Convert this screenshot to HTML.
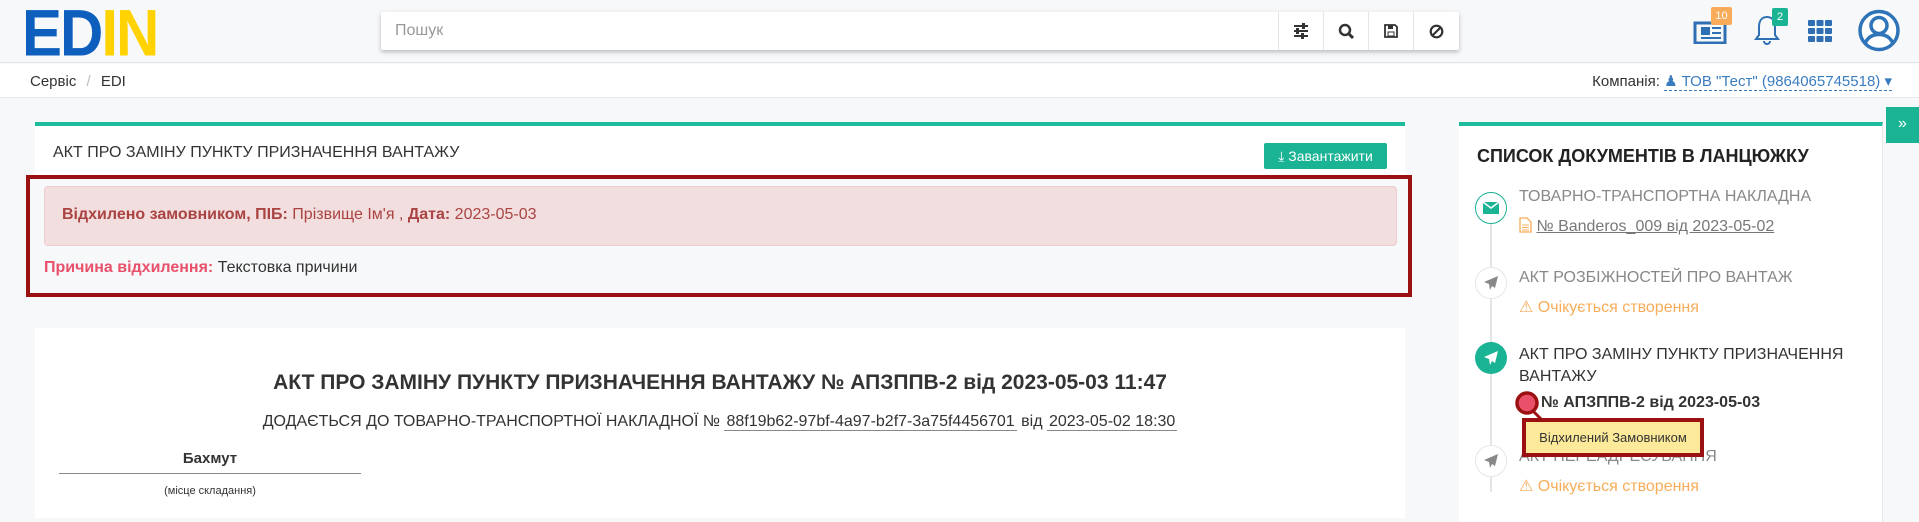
<!DOCTYPE html>
<html><head><meta charset="utf-8"><style>
*{box-sizing:border-box;margin:0;padding:0}
body{width:1919px;height:511px;overflow:hidden;background:#f7f8fa;font-family:"Liberation Sans",sans-serif;color:#333;position:relative}
.a{position:absolute}
.hdr{left:0;top:0;width:1919px;height:63px;background:#f7f8fa;border-bottom:1px solid #e3e5e8}
.bc{left:0;top:64px;width:1919px;height:34px;background:#fff;border-bottom:1px solid #e7e7e7}
.logo{font-weight:bold;font-size:60px;line-height:48px;letter-spacing:-2px;transform:scaleY(1.1);transform-origin:top left}
.search{left:381px;top:12px;width:1078px;height:38px;background:#fff;box-shadow:0 2px 5px rgba(0,0,0,.25);border-radius:2px}
.sb{top:0;height:38px;width:45px;border-left:1px solid #e5e5e5;display:flex;align-items:center;justify-content:center}
.card{background:#fff;border-top:4px solid #1cbc9c}
.tl{left:1490px;top:212px;width:2px;height:280px;background:#e5e5e5}
.circ{width:32px;height:32px;border-radius:50%;display:flex;align-items:center;justify-content:center}
.it{font-size:16px;color:#888}
.warn{font-size:16px;color:#f8ac59}
</style></head><body>
<div class="a hdr"></div>
<div class="a logo" style="left:22px;top:7px"><span style="color:#0d5ebd">ED</span><span style="color:#ffd200">IN</span></div>
<div class="a search">
  <div class="a" style="left:14px;top:10px;font-size:16px;color:#999">Пошук</div>
  <div class="a sb" style="left:897px"><svg width="16" height="16" viewBox="0 0 16 16"><g stroke="#333" stroke-width="2"><line x1="1" y1="3" x2="15" y2="3"/><line x1="1" y1="8" x2="15" y2="8"/><line x1="1" y1="13" x2="15" y2="13"/></g><g fill="#333"><rect x="9" y="0" width="3" height="6"/><rect x="3" y="5" width="3" height="6"/><rect x="8" y="10" width="3" height="6"/></g></svg></div>
  <div class="a sb" style="left:942px"><svg width="16" height="16" viewBox="0 0 16 16"><circle cx="7" cy="7" r="5" fill="none" stroke="#333" stroke-width="2.5"/><line x1="10.5" y1="10.5" x2="15" y2="15" stroke="#333" stroke-width="3"/></svg></div>
  <div class="a sb" style="left:987px"><svg width="14" height="14" viewBox="0 0 14 14"><path d="M1 1h10l2 2v10H1z" fill="none" stroke="#333" stroke-width="1.8"/><rect x="4" y="1" width="5" height="4" fill="#333"/><rect x="4" y="8" width="6" height="4" fill="none" stroke="#333"/></svg></div>
  <div class="a sb" style="left:1032px"><svg width="15" height="15" viewBox="0 0 15 15"><circle cx="7.5" cy="7.5" r="5.8" fill="none" stroke="#333" stroke-width="2.2"/><line x1="3.5" y1="11.5" x2="11.5" y2="3.5" stroke="#333" stroke-width="2.2"/></svg></div>
</div>
<svg class="a" style="left:1693px;top:18px" width="34" height="26" viewBox="0 0 34 26"><rect x="2" y="5" width="30" height="20" fill="none" stroke="#2f6fb3" stroke-width="3"/><rect x="8" y="9" width="9" height="8" fill="#2f6fb3"/><g stroke="#2f6fb3" stroke-width="2"><line x1="19" y1="10" x2="28" y2="10"/><line x1="19" y1="15" x2="28" y2="15"/><line x1="8" y1="20" x2="28" y2="20"/></g></svg>
<div class="a" style="left:1711px;top:7px;width:21px;height:18px;background:#f8ac59;color:#fff;font-size:11px;text-align:center;line-height:18px;border-radius:2px">10</div>
<svg class="a" style="left:1754px;top:14px" width="26" height="32" viewBox="0 0 26 32"><path d="M13 3c-6 0-8 5-8 10v8l-3 4h22l-3-4v-8c0-5-2-10-8-10z" fill="none" stroke="#2f6fb3" stroke-width="2"/><path d="M10 27a3 3 0 0 0 6 0" fill="none" stroke="#2f6fb3" stroke-width="2"/></svg>
<div class="a" style="left:1772px;top:8px;width:16px;height:18px;background:#1ab394;color:#fff;font-size:11px;text-align:center;line-height:18px;border-radius:2px">2</div>
<svg class="a" style="left:1808px;top:20px" width="24" height="22" viewBox="0 0 24 22"><g fill="#2f6fb3"><rect x="0" y="0" width="7" height="6" rx="1"/><rect x="8.5" y="0" width="7" height="6" rx="1"/><rect x="17" y="0" width="7" height="6" rx="1"/><rect x="0" y="8" width="7" height="6" rx="1"/><rect x="8.5" y="8" width="7" height="6" rx="1"/><rect x="17" y="8" width="7" height="6" rx="1"/><rect x="0" y="16" width="7" height="6" rx="1"/><rect x="8.5" y="16" width="7" height="6" rx="1"/><rect x="17" y="16" width="7" height="6" rx="1"/></g></svg>
<svg class="a" style="left:1858px;top:9px" width="42" height="43" viewBox="0 0 42 42"><defs><clipPath id="c"><circle cx="21" cy="21" r="18"/></clipPath></defs><circle cx="21" cy="21" r="19" fill="#fff" stroke="#2f74b8" stroke-width="3.5"/><circle cx="21" cy="16" r="8" fill="none" stroke="#2f74b8" stroke-width="3.5"/><path d="M7 34c3-7 8-9 14-9s11 2 14 9" fill="none" stroke="#2f74b8" stroke-width="3.5" clip-path="url(#c)"/></svg>

<div class="a bc"></div>
<div class="a" style="left:30px;top:73px;font-size:15px;color:#333">Сервіс <span style="color:#bbb;margin:0 6px">/</span> EDI</div>
<div class="a" style="right:27px;top:72px;font-size:15px;color:#333;white-space:nowrap">Компанія: <span style="color:#3a7cc0;border-bottom:1px dashed #3a7cc0">&#9823; ТОВ "Тест" (9864065745518) ▾</span></div>

<div class="a card" style="left:35px;top:122px;width:1370px;height:160px"></div>
<div class="a" style="left:53px;top:144px;font-size:16px;color:#333">АКТ ПРО ЗАМІНУ ПУНКТУ ПРИЗНАЧЕННЯ ВАНТАЖУ</div>
<div class="a" style="left:1264px;top:143px;width:123px;height:26px;background:#1ab394;color:#fff;font-size:14px;line-height:26px;text-align:center;border-radius:2px">&#10515; Завантажити</div>
<div class="a" style="left:26px;top:175px;width:1386px;height:122px;border:4px solid #9b1111;background:#f7f8fa"></div>
<div class="a" style="left:44px;top:186px;width:1353px;height:60px;background:#f2dede;border:1px solid #ebccd1;border-radius:4px;color:#a94442;font-size:16px;padding:19px 17px">
<b>Відхилено замовником, ПІБ:</b> Прізвище Ім'я , <b>Дата:</b> 2023-05-03</div>
<div class="a" style="left:44px;top:259px;font-size:16px"><b style="color:#e9506a">Причина відхилення:</b> Текстовка причини</div>

<div class="a" style="left:35px;top:328px;width:1370px;height:190px;background:#fff"></div>
<div class="a" style="left:35px;top:371px;width:1370px;text-align:center;font-size:21px;font-weight:bold;color:#333">АКТ ПРО ЗАМІНУ ПУНКТУ ПРИЗНАЧЕННЯ ВАНТАЖУ № АПЗППВ-2 від 2023-05-03 11:47</div>
<div class="a" style="left:35px;top:413px;width:1370px;text-align:center;font-size:16px;color:#333;white-space:nowrap">ДОДАЄТЬСЯ ДО ТОВАРНО-ТРАНСПОРТНОЇ НАКЛАДНОЇ № <span style="border-bottom:1px solid #888;padding:0 2px">88f19b62-97bf-4a97-b2f7-3a75f4456701</span> від <span style="border-bottom:1px solid #888;padding:0 2px">2023-05-02 18:30</span></div>
<div class="a" style="left:59px;top:450px;width:302px;text-align:center;font-size:15px;font-weight:bold;border-bottom:1px solid #888;padding-bottom:6px">Бахмут</div>
<div class="a" style="left:59px;top:485px;width:302px;text-align:center;font-size:11px">(місце складання)</div>

<div class="a card" style="left:1459px;top:122px;width:424px;height:400px;border-right:1px solid #e7e7e7"></div>
<div class="a" style="left:1886px;top:107px;width:33px;height:36px;background:#1ab394;color:#fff;text-align:center;line-height:34px;font-size:16px">»</div>
<div class="a" style="left:1477px;top:146px;font-size:18px;font-weight:bold;color:#222">СПИСОК ДОКУМЕНТІВ В ЛАНЦЮЖКУ</div>
<div class="a tl"></div>
<div class="a circ" style="left:1475px;top:192px;border:1.5px solid #1ab394;background:#fff"><svg width="16" height="12"><rect width="16" height="12" fill="#1ab394"/><path d="M0 0l8 6 8-6" fill="none" stroke="#fff" stroke-width="1.5"/></svg></div>
<div class="a it" style="left:1519px;top:188px">ТОВАРНО-ТРАНСПОРТНА НАКЛАДНА</div>
<div class="a" style="left:1519px;top:217px;font-size:16px;color:#777"><svg width="13" height="16" viewBox="0 0 13 16" style="vertical-align:-2px"><path d="M1 1h7l4 4v10H1z" fill="none" stroke="#f8ac59" stroke-width="1.3"/><g stroke="#f8ac59"><line x1="3" y1="8" x2="10" y2="8"/><line x1="3" y1="10.5" x2="10" y2="10.5"/><line x1="3" y1="13" x2="10" y2="13"/></g></svg> <u> № Banderos_009 від 2023-05-02</u></div>

<div class="a circ" style="left:1475px;top:267px;border:1px solid #e5e5e5;background:#fff"><svg width="16" height="16" viewBox="0 0 16 16"><path d="M15 1L1 7l5 2 1 6 2-4 3 2z" fill="#888"/></svg></div>
<div class="a it" style="left:1519px;top:269px">АКТ РОЗБІЖНОСТЕЙ ПРО ВАНТАЖ</div>
<div class="a warn" style="left:1519px;top:297px">&#9888; Очікується створення</div>

<div class="a circ" style="left:1475px;top:342px;background:#1ab394"><svg width="16" height="16" viewBox="0 0 16 16"><path d="M15 1L1 7l5 2 1 6 2-4 3 2z" fill="#fff"/></svg></div>
<div class="a" style="left:1519px;top:344px;font-size:16px;color:#333;line-height:22px">АКТ ПРО ЗАМІНУ ПУНКТУ ПРИЗНАЧЕННЯ<br>ВАНТАЖУ</div>
<div class="a" style="left:1541px;top:394px;font-size:16px;font-weight:bold;color:#333">№ АПЗППВ-2 від 2023-05-03</div>

<div class="a circ" style="left:1475px;top:445px;border:1px solid #e5e5e5;background:#fff"><svg width="16" height="16" viewBox="0 0 16 16"><path d="M15 1L1 7l5 2 1 6 2-4 3 2z" fill="#888"/></svg></div>
<div class="a it" style="left:1519px;top:448px">АКТ ПЕРЕАДРЕСУВАННЯ</div>
<div class="a warn" style="left:1519px;top:476px">&#9888; Очікується створення</div>

<svg class="a" style="left:1512px;top:390px" width="40" height="32"><line x1="20" y1="20" x2="31" y2="31" stroke="#9b1111" stroke-width="3"/><circle cx="15" cy="13" r="10" fill="#e9506a" stroke="#9b1111" stroke-width="3.5"/></svg>
<div class="a" style="left:1522px;top:418px;width:182px;height:39px;background:#fce99a;border:4px solid #9b1111;font-size:13px;color:#333;line-height:31px;text-align:center">Відхилений Замовником</div>
</body></html>
